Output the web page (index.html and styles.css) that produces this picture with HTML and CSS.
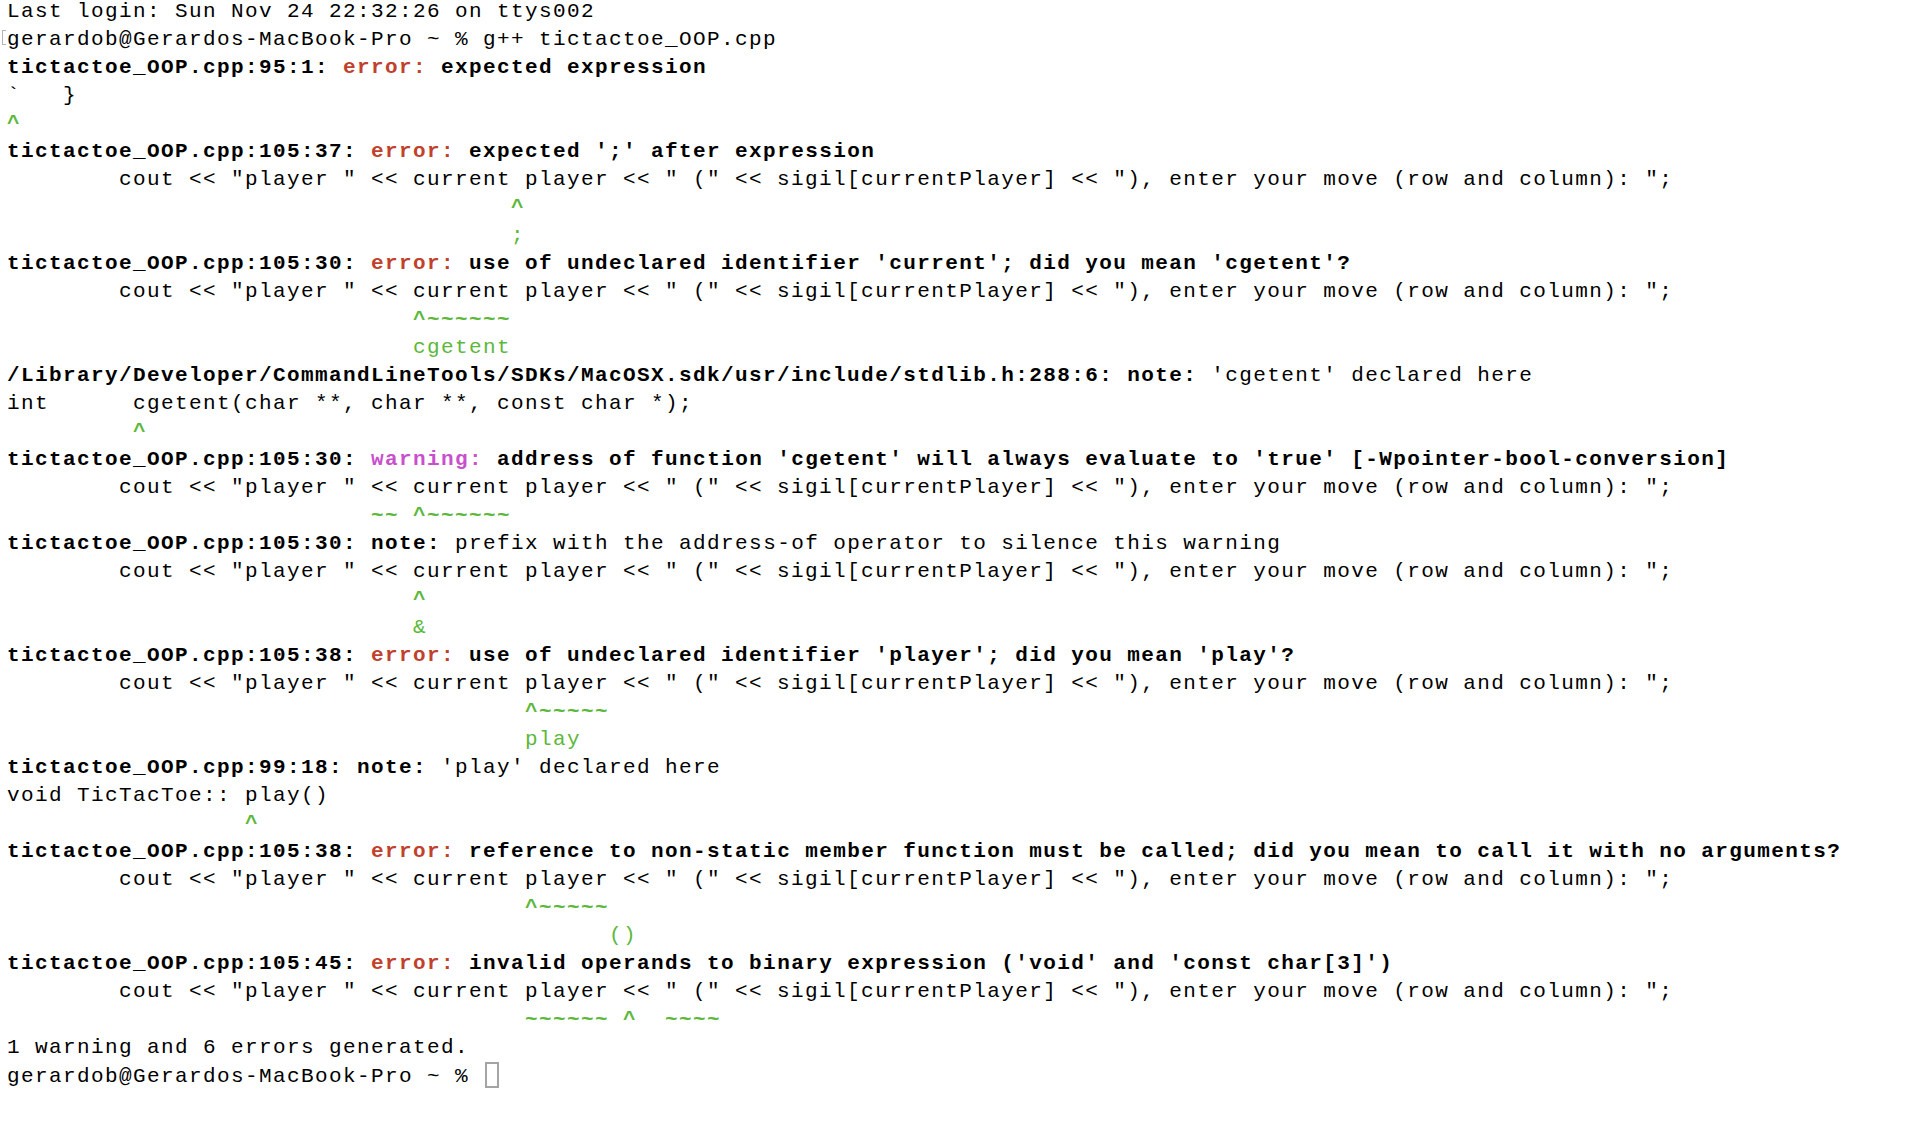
FILE: index.html
```html
<!DOCTYPE html>
<html lang="en">
<head>
<meta charset="utf-8">
<title>Terminal</title>
<link rel="stylesheet" href="styles.css">
</head>
<body>
<pre class="term"><span>Last login: Sun Nov 24 22:32:26 on ttys002</span>
<span class="mark"></span>gerardob@Gerardos-MacBook-Pro ~ % g++ tictactoe_OOP.cpp
<b>tictactoe_OOP.cpp:95:1: <span class="err">error:</span> expected expression</b>
`   }
<b class="grn">^</b>
<b>tictactoe_OOP.cpp:105:37: <span class="err">error:</span> expected ';' after expression</b>
        cout &lt;&lt; "player " &lt;&lt; current player &lt;&lt; " (" &lt;&lt; sigil[currentPlayer] &lt;&lt; "), enter your move (row and column): ";
<b class="grn">                                    ^</b>
<span class="grn">                                    ;</span>
<b>tictactoe_OOP.cpp:105:30: <span class="err">error:</span> use of undeclared identifier 'current'; did you mean 'cgetent'?</b>
        cout &lt;&lt; "player " &lt;&lt; current player &lt;&lt; " (" &lt;&lt; sigil[currentPlayer] &lt;&lt; "), enter your move (row and column): ";
<b class="grn">                             ^~~~~~~</b>
<span class="grn">                             cgetent</span>
<b>/Library/Developer/CommandLineTools/SDKs/MacOSX.sdk/usr/include/stdlib.h:288:6: note:</b> 'cgetent' declared here
int      cgetent(char **, char **, const char *);
<b class="grn">         ^</b>
<b>tictactoe_OOP.cpp:105:30: <span class="warn">warning:</span> address of function 'cgetent' will always evaluate to 'true' [-Wpointer-bool-conversion]</b>
        cout &lt;&lt; "player " &lt;&lt; current player &lt;&lt; " (" &lt;&lt; sigil[currentPlayer] &lt;&lt; "), enter your move (row and column): ";
<b class="grn">                          ~~ ^~~~~~~</b>
<b>tictactoe_OOP.cpp:105:30: note:</b> prefix with the address-of operator to silence this warning
        cout &lt;&lt; "player " &lt;&lt; current player &lt;&lt; " (" &lt;&lt; sigil[currentPlayer] &lt;&lt; "), enter your move (row and column): ";
<b class="grn">                             ^</b>
<span class="grn">                             &amp;</span>
<b>tictactoe_OOP.cpp:105:38: <span class="err">error:</span> use of undeclared identifier 'player'; did you mean 'play'?</b>
        cout &lt;&lt; "player " &lt;&lt; current player &lt;&lt; " (" &lt;&lt; sigil[currentPlayer] &lt;&lt; "), enter your move (row and column): ";
<b class="grn">                                     ^~~~~~</b>
<span class="grn">                                     play</span>
<b>tictactoe_OOP.cpp:99:18: note:</b> 'play' declared here
void TicTacToe:: play()
<b class="grn">                 ^</b>
<b>tictactoe_OOP.cpp:105:38: <span class="err">error:</span> reference to non-static member function must be called; did you mean to call it with no arguments?</b>
        cout &lt;&lt; "player " &lt;&lt; current player &lt;&lt; " (" &lt;&lt; sigil[currentPlayer] &lt;&lt; "), enter your move (row and column): ";
<b class="grn">                                     ^~~~~~</b>
<span class="grn">                                           ()</span>
<b>tictactoe_OOP.cpp:105:45: <span class="err">error:</span> invalid operands to binary expression ('void' and 'const char[3]')</b>
        cout &lt;&lt; "player " &lt;&lt; current player &lt;&lt; " (" &lt;&lt; sigil[currentPlayer] &lt;&lt; "), enter your move (row and column): ";
<b class="grn">                                     ~~~~~~ ^  ~~~~</b>
1 warning and 6 errors generated.
gerardob@Gerardos-MacBook-Pro ~ % <span class="cursor"></span></pre>
</body>
</html>
```

FILE: styles.css
```css
html, body {
  margin: 0;
  padding: 0;
  background: #ffffff;
}

.term {
  margin: -2px 0 0 0;
  padding: 0 0 0 7px;
  font-family: "Liberation Mono", "DejaVu Sans Mono", monospace;
  font-size: 21px;
  letter-spacing: 1.4px;
  line-height: 28px;
  color: #000000;
  white-space: pre;
}

.term b {
  font-weight: bold;
}

.err {
  color: #c0412d;
}

.warn {
  color: #c850cd;
}

.grn {
  color: #5cb83a;
}

.mark {
  display: inline-block;
  width: 3px;
  height: 13px;
  border: 1px solid #b4b4b4;
  border-right: none;
  margin-left: -5px;
  margin-right: 1px;
  vertical-align: baseline;
}

.cursor {
  display: inline-block;
  width: 10px;
  height: 22px;
  border: 2px solid #a4a4a4;
  margin-left: 2px;
  vertical-align: -6px;
}
```
